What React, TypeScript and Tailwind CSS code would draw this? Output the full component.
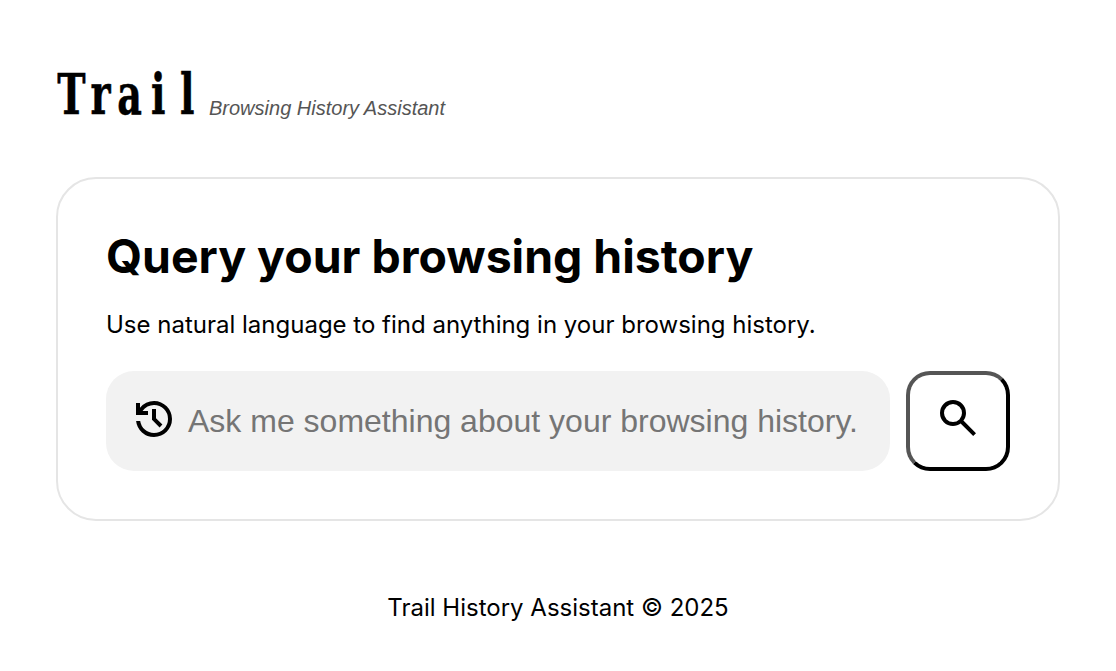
import React from 'react';

function HistoryIcon() {
  return (
    <svg viewBox="0 -960 960 960" className="w-12 h-12 shrink-0 mb-1" fill="currentColor">
      <path d="M480-120q-138 0-240.5-91.5T122-440h82q14 104 92.5 172T480-200q117 0 198.5-81.5T760-480q0-117-81.5-198.5T480-760q-69 0-129 32t-101 88h110v80H120v-240h80v94q51-64 124.5-99T480-840q75 0 140.5 28.5t114 77q48.5 48.5 77 114T840-480q0 75-28.5 140.5t-77 114q-48.5 48.5-114 77T480-120Zm112-192L440-464v-216h80v184l128 128-56 56Z" />
    </svg>
  );
}

function SearchIcon() {
  return (
    <svg viewBox="0 -960 960 960" className="w-12 h-12 mb-[6px]" fill="currentColor">
      <path d="M784-120 532-372q-30 24-69 38t-83 14q-109 0-184.5-75.5T120-580q0-109 75.5-184.5T380-840q109 0 184.5 75.5T640-580q0 44-14 83t-38 69l252 252-56 56ZM380-400q75 0 127.5-52.5T560-580q0-75-52.5-127.5T380-760q-75 0-127.5 52.5T200-580q0 75 52.5 127.5T380-400Z" />
    </svg>
  );
}

export default function App() {
  return (
    <div className="min-h-[671px] bg-white px-14 pt-[62px] font-['Inter',sans-serif] text-black">
      <header className="flex items-end h-[60px] pl-[1px]">
        <h1 className="flex w-[144px] h-[60px] font-['DejaVu_Serif',serif] font-bold text-[56px] leading-[60px] whitespace-nowrap [-webkit-text-stroke:0.6px_black]">
          {['T', 'r', 'a', 'i', 'l'].map((c, i) => (
            <span key={i} className="flex justify-center w-[29px] scale-x-[0.68] translate-y-[2px]">{c}</span>
          ))}
        </h1>
        <p className="font-['Liberation_Sans',sans-serif] italic text-[20px] leading-[24px] text-[#555] ml-2 mb-[2px]">Browsing History Assistant</p>
      </header>

      <main className="mt-[55px] w-[1004px] h-[344px] border-2 border-[#e5e5e5] rounded-[40px] px-12 pt-[47px]">
        <h2 className="text-[46.4px] leading-[60px] font-bold whitespace-nowrap">Query your browsing history</h2>
        <p className="mt-6 text-[24px] leading-[30px] whitespace-nowrap">Use natural language to find anything in your browsing history.</p>
        <div className="mt-[31px] flex gap-4">
          <div className="flex items-center w-[784px] h-[100px] bg-[#f2f2f2] rounded-[28px] pl-6">
            <HistoryIcon />
            <span className="ml-[10px] font-['Liberation_Sans',sans-serif] text-[32px] text-[#757575] whitespace-nowrap">Ask me something about your browsing history.</span>
          </div>
          <button className="flex items-center justify-center w-[104px] h-[100px] rounded-[24px] border-4 border-black border-t-[#555] border-l-[#555] bg-white">
            <SearchIcon />
          </button>
        </div>
      </main>

      <footer className="mt-[72px] text-center text-[24px] leading-[30px]">Trail History Assistant © 2025</footer>
    </div>
  );
}
